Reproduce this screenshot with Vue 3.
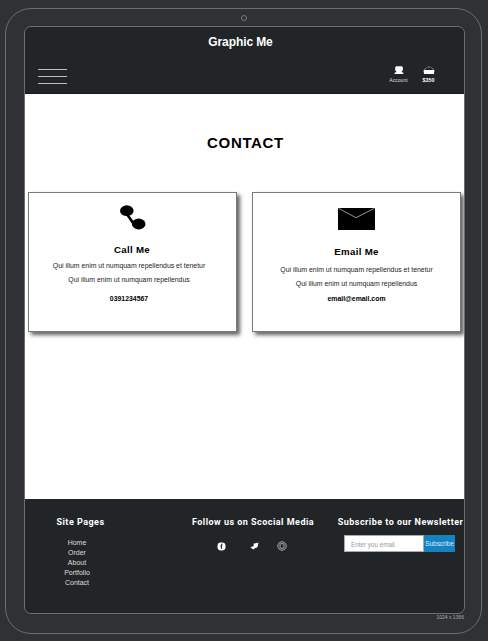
<script setup>
const pages = ['Home', 'Order', 'About', 'Portfolio', 'Contact']
</script>

<template>
  <div class="device">
    <div class="bezel">
      <div class="camera"></div>
      <div class="screen">
        <header class="header">
          <div class="brand"><span>Graphic Me</span></div>
          <div class="bar">
            <div class="burger"><i></i><i></i><i></i></div>
            <div class="actions">
              <div class="action account">
                <svg width="10" height="9" viewBox="0 0 10 9"><path d="M2 .2h6l.8 1v3L8 5.3l-.6.8 2 .7V8H.6V6.8l2-.7L2 5.3l-.8-1.1v-3z" fill="#fff" /></svg>
                <span>Account</span>
              </div>
              <div class="action cart">
                <svg width="12" height="9" viewBox="0 0 12 9"><path d="M1.2 3.8 3.8 1.4M8.2 1.4 10.8 3.8M4.8 1h2.4" stroke="#aaa" stroke-width=".8" fill="none" /><path d="M.7 4h10.6v1.2L11 8H1L.7 5.2z" fill="#fff" /></svg>
                <span>$350</span>
              </div>
            </div>
          </div>
        </header>

        <main class="main">
          <h1><span>CONTACT</span></h1>
          <div class="cards">
            <section class="card call">
              <svg class="icon" width="26" height="25" viewBox="0 0 26 25">
                <path d="M6.5 8.5 14.5 20" stroke="#000" stroke-width="2.6" />
                <ellipse cx="6.8" cy="5.7" rx="6.8" ry="5.4" />
                <ellipse cx="18.7" cy="19" rx="6.8" ry="5.4" />
              </svg>
              <h2><span>Call Me</span></h2>
              <p class="long"><span>Qui illum enim ut numquam repellendus et tenetur</span></p>
              <p class="short"><span>Qui illum enim ut numquam repellendus</span></p>
              <strong><span>0391234567</span></strong>
            </section>
            <section class="card email">
              <svg class="icon" width="37" height="22" viewBox="0 0 37 22">
                <path d="M0 0h37v22H0z" />
                <path d="M.5.3 18 9.7 36.5.3" stroke="#bbb" stroke-width=".8" fill="none" />
              </svg>
              <h2><span>Email Me</span></h2>
              <p class="long"><span>Qui illum enim ut numquam repellendus et tenetur</span></p>
              <p class="short"><span>Qui illum enim ut numquam repellendus</span></p>
              <strong><span>email@email.com</span></strong>
            </section>
          </div>
        </main>

        <footer class="footer">
          <div class="col pages">
            <h3><span>Site Pages</span></h3>
            <ul>
              <li v-for="page in pages" :key="page"><span>{{ page }}</span></li>
            </ul>
          </div>
          <div class="col social">
            <h3><span>Follow us on Scocial Media</span></h3>
            <div class="networks">
              <svg width="9" height="9" viewBox="0 0 9 9"><rect x=".5" y=".5" width="8" height="8" rx="3.4" fill="#fff" /><path d="M5.5 2.2H4.4v4.8M3.3 4h2" stroke="#25282a" stroke-width="1" fill="none" /></svg>
              <svg class="bird" width="9" height="9" viewBox="0 0 9 9"><path d="M3.5 1.4 5.2 1.6 6 .7l1.4.2 1.4-.1-.8 1.3v2L6.6 5.7 4.9 6 3.9 7.4 2 6.7.3 5l1.5-.2 2-.7z" fill="#fff" /></svg>
              <svg width="10" height="10" viewBox="0 0 10 10" fill="none" stroke="#bbb"><circle cx="5" cy="5" r="4.2" stroke-width=".9" /><rect x="3" y="2.7" width="4" height="4.6" rx="1" stroke-width=".9" /></svg>
            </div>
          </div>
          <div class="col news">
            <h3><span>Subscribe to our Newsletter</span></h3>
            <div class="form">
              <div class="field"><span>Enter you email</span></div>
              <div class="button"><span>Subscribe</span></div>
            </div>
          </div>
        </footer>
      </div>
      <div class="size"><span>1024 x 1366</span></div>
    </div>
  </div>
</template>

<style>
body { margin: 0; background: #303134; }
</style>

<style scoped>
* { box-sizing: border-box; }
h1, h2, h3, p, ul { margin: 0; padding: 0; list-style: none; }
span { white-space: nowrap; }
svg { display: block; flex: none; }
.device {
  width: 488px; height: 641px; padding: 8px 6px 7px 5px;
  background: #303134; font-family: "Liberation Sans", Arial, sans-serif;
}
.bezel {
  height: 626px; padding: 6px 17px 0 18px; border: 1px solid #6c6d70; border-radius: 26px;
  display: flex; flex-direction: column;
}
.camera { width: 6px; height: 6px; margin: 0 auto 5px; border: 1px solid #77787a; border-radius: 50%; }
.screen {
  width: 441px; height: 588px; border: 1px solid #6c6d70; border-radius: 7px; overflow: hidden;
  background: #222527; display: flex; flex-direction: column; flex: none;
}
.header { height: 67px; color: #fff; border-bottom: 1px solid #17191b; flex: none; }
.brand { height: 30px; line-height: 30px; text-align: center; font-size: 12px; font-weight: 700; letter-spacing: -.1px; padding-right: 8px; }
.bar { display: flex; justify-content: space-between; padding: 9px 29px 0 13px; }
.burger { display: flex; flex-direction: column; gap: 6px; padding-top: 3px; }
.burger i { width: 29px; height: 1px; background: #bfc0c1; }
.actions { display: flex; gap: 14px; }
.action { display: flex; flex-direction: column; align-items: center; font-size: 5.1px; line-height: 8px; gap: 1px; }
.account { width: 19px; color: #ddd; }
.cart { width: 13px; font-weight: 700; font-size: 5.3px; }

.main { height: 405px; background: #fff; color: #000; padding-top: 39px; flex: none; }
h1 { height: 20px; line-height: 20px; font-size: 15px; text-align: center; letter-spacing: .65px; padding-left: 2px; }
.cards { display: flex; gap: 15px; padding: 39px 3px 0; }
.card {
  width: 209px; height: 140px; border: 1px solid #777b79; box-shadow: 3px 3px 4px #606462;
  background: #fff; display: flex; flex-direction: column; align-items: center;
}
.call { padding: 12px 7px 0 0; }
.call .icon { margin-left: 8px; }
.email { padding-top: 15px; }
h2 { font-size: 9.7px; line-height: 14px; letter-spacing: .3px; }
.call h2 { margin: 13px 0 0 6px; }
.email h2 { margin-top: 15px; }
p { font-size: 6.9px; line-height: 14px; color: #222; }
.call .long { margin-top: 2px; }
.email .long { margin-top: 4px; }
strong { font-size: 6.9px; line-height: 12px; }
.call strong { margin-top: 6px; }
.email strong { margin-top: 2px; }

.footer { flex: 1; color: #fff; display: flex; padding-top: 16px; }
.col { display: flex; flex-direction: column; align-items: center; flex: none; }
h3 { font-family: Roboto, "Liberation Sans", sans-serif; font-size: 9px; line-height: 14px; letter-spacing: .48px; }
.pages { width: 111px; }
.pages ul { margin-top: 9px; padding-right: 7px; }
.pages li { height: 10px; line-height: 10px; font-size: 7px; text-align: center; color: #ddd; }
.social { width: 234px; }
.networks { display: flex; align-items: center; margin-top: 12px; padding-right: 2px; }
.bird { margin: 0 18px 0 24px; }
.news { width: 111px; margin-left: -25px; }
.form { display: flex; margin-top: 6px; width: 111px; height: 17px; margin-right: 2px; }
.field { width: 80px; background: #fff; border: 1px solid #aaa; color: #999; font-size: 6.3px; line-height: 17px; padding-left: 6px; }
.button { width: 31px; background: #1782bf; color: #d8efff; font-size: 6.4px; line-height: 18px; text-align: center; }
.size { text-align: right; color: #aaa; font-size: 5px; line-height: 7px; }
</style>
